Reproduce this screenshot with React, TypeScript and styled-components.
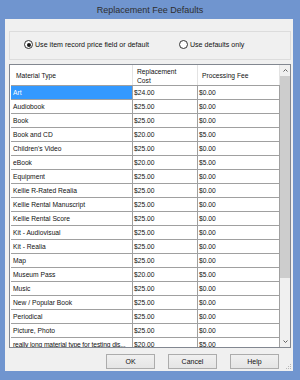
import styled, { createGlobalStyle, css } from "styled-components";

const FRAME = "#7095cf";
const GRID_LINE = "#a0a0a0";

const GlobalStyle = createGlobalStyle`
  html, body {
    margin: 0;
    padding: 0;
    background: #fff;
  }
  body {
    font-family: "Liberation Sans", Arial, sans-serif;
  }
`;

const Window = styled.div`
  width: 300px;
  height: 380px;
  box-sizing: border-box;
  background: ${FRAME};
  display: flex;
  flex-direction: column;
  padding: 0 7px 9px 5px;
`;

const TitleBar = styled.div`
  height: 19px;
  margin: 0 -7px 0 -5px;
  line-height: 20px;
  text-align: center;
  font-size: 9px;
  color: #2e2e2e;
`;

const Client = styled.div`
  position: relative;
  flex: 1;
  background: #f0f0f0;
  display: flex;
  flex-direction: column;
  padding: 12px 2px 0 4px;
`;

const OptionGroup = styled.div`
  height: 29px;
  box-sizing: border-box;
  border: 1px solid #dcdcdc;
  display: flex;
  align-items: center;
  gap: 30px;
  padding: 0 0 2px 14px;
`;

const RadioOption = styled.label`
  display: flex;
  align-items: center;
  gap: 2px;
  font-size: 7.1px;
  color: #111;
`;

const RadioDot = styled.span<{ $checked?: boolean }>`
  position: relative;
  width: 9px;
  height: 9px;
  box-sizing: border-box;
  border-radius: 50%;
  border: 1px solid #333;
  background: #fff;

  ${(p) =>
    p.$checked &&
    css`
      &::after {
        content: "";
        position: absolute;
        inset: 1.5px;
        border-radius: 50%;
        background: #1a1a1a;
      }
    `}
`;

const Grid = styled.div`
  margin-top: 4px;
  height: 284px;
  box-sizing: border-box;
  border: 1px solid #828790;
  display: flex;
  background: #fff;
  overflow: hidden;
`;

const Table = styled.div`
  width: 270px;
  box-sizing: border-box;
  padding-left: 1px;
  display: flex;
  flex-direction: column;
`;

const COLUMNS = "122px 65px 82px";

const HeaderRow = styled.div`
  display: grid;
  grid-template-columns: ${COLUMNS};
  height: 21px;
  flex-shrink: 0;
  box-sizing: border-box;
  border-bottom: 1px solid ${GRID_LINE};
`;

const HeaderCell = styled.div<{ $pad: number }>`
  display: flex;
  align-items: center;
  padding: 1px 0 0 ${(p) => p.$pad}px;
  border-right: 1px solid #e3e3e3;
  font-size: 6.7px;
  line-height: 9px;
  color: #111;
`;

const Row = styled.div`
  display: grid;
  grid-template-columns: ${COLUMNS};
  height: 14px;
  flex-shrink: 0;
  box-sizing: border-box;
  border-bottom: 1px solid ${GRID_LINE};
`;

const Cell = styled.div<{ $pad: number; $selected?: boolean; $tight?: boolean }>`
  padding-left: ${(p) => p.$pad}px;
  border-right: 1px solid ${GRID_LINE};
  font-size: 6.7px;
  line-height: 13px;
  white-space: nowrap;
  overflow: hidden;
  color: #111;
  letter-spacing: ${(p) => (p.$tight ? "-0.12px" : "0")};

  ${(p) =>
    p.$selected &&
    css`
      background: #3399ff;
      color: #fff;
    `}
`;

const ScrollBar = styled.div`
  width: 10px;
  display: flex;
  flex-direction: column;
  background: #f0f0f0;
`;

const ScrollArrow = styled.div`
  height: 11px;
  flex-shrink: 0;
  display: flex;
  align-items: center;
  justify-content: center;
`;

const ScrollThumb = styled.div`
  height: 202px;
  flex-shrink: 0;
  background: #cdcdcd;
`;

const ScrollTrack = styled.div`
  flex: 1;
`;

const ButtonRow = styled.div`
  display: flex;
  justify-content: flex-end;
  gap: 13px;
  margin-top: 6px;
  padding-right: 12px;
`;

const DialogButton = styled.button`
  width: 49px;
  height: 15px;
  box-sizing: border-box;
  padding: 0;
  border: 1px solid #acacac;
  background: linear-gradient(#f0f0f0, #e5e5e5);
  font-family: "Liberation Sans", Arial, sans-serif;
  font-size: 7px;
  color: #111;
`;

const Grip = styled.svg`
  position: absolute;
  right: 1px;
  bottom: 1px;
`;

const rows: [string, string, string][] = [
  ["Art", "$24.00", "$0.00"],
  ["Audiobook", "$25.00", "$0.00"],
  ["Book", "$25.00", "$0.00"],
  ["Book and CD", "$20.00", "$5.00"],
  ["Children's Video", "$25.00", "$0.00"],
  ["eBook", "$20.00", "$5.00"],
  ["Equipment", "$25.00", "$0.00"],
  ["Kellie R-Rated Realia", "$25.00", "$0.00"],
  ["Kellie Rental Manuscript", "$25.00", "$0.00"],
  ["Kellie Rental Score", "$25.00", "$0.00"],
  ["Kit - Audiovisual", "$25.00", "$0.00"],
  ["Kit - Realia", "$25.00", "$0.00"],
  ["Map", "$25.00", "$0.00"],
  ["Museum Pass", "$20.00", "$5.00"],
  ["Music", "$25.00", "$0.00"],
  ["New / Popular Book", "$25.00", "$0.00"],
  ["Periodical", "$25.00", "$0.00"],
  ["Picture, Photo", "$25.00", "$0.00"],
  ["really long material type for testing dis...", "$20.00", "$5.00"],
];

function Chevron({ up }: { up?: boolean }) {
  return (
    <svg width="5" height="3" viewBox="0 0 5 3">
      <path
        d={up ? "M0.5 2.5 L2.5 0.5 L4.5 2.5" : "M0.5 0.5 L2.5 2.5 L4.5 0.5"}
        fill="none"
        stroke="#606060"
        strokeWidth="1"
      />
    </svg>
  );
}

export default function App() {
  return (
    <>
      <GlobalStyle />
      <Window>
        <TitleBar>Replacement Fee Defaults</TitleBar>
        <Client>
          <OptionGroup>
            <RadioOption>
              <RadioDot $checked />
              Use item record price field or default
            </RadioOption>
            <RadioOption>
              <RadioDot />
              Use defaults only
            </RadioOption>
          </OptionGroup>

          <Grid>
            <Table>
              <HeaderRow>
                <HeaderCell $pad={5}>Material Type</HeaderCell>
                <HeaderCell $pad={4}>
                  Replacement
                  <br />
                  Cost
                </HeaderCell>
                <HeaderCell $pad={4}>Processing Fee</HeaderCell>
              </HeaderRow>
              {rows.map(([name, cost, fee], i) => (
                <Row key={name}>
                  <Cell $pad={2} $selected={i === 0} $tight={name.endsWith("...")}>
                    {name}
                  </Cell>
                  <Cell $pad={1}>{cost}</Cell>
                  <Cell $pad={1}>{fee}</Cell>
                </Row>
              ))}
            </Table>
            <ScrollBar>
              <ScrollArrow>
                <Chevron up />
              </ScrollArrow>
              <ScrollThumb />
              <ScrollTrack />
              <ScrollArrow>
                <Chevron />
              </ScrollArrow>
            </ScrollBar>
          </Grid>

          <ButtonRow>
            <DialogButton>OK</DialogButton>
            <DialogButton>Cancel</DialogButton>
            <DialogButton>Help</DialogButton>
          </ButtonRow>

          <Grip width="6" height="6" viewBox="0 0 6 6">
            <rect x="4" y="0" width="1" height="1" fill="#b8b8b8" />
            <rect x="2" y="2" width="1" height="1" fill="#b8b8b8" />
            <rect x="4" y="2" width="1" height="1" fill="#b8b8b8" />
            <rect x="0" y="4" width="1" height="1" fill="#b8b8b8" />
            <rect x="2" y="4" width="1" height="1" fill="#b8b8b8" />
            <rect x="4" y="4" width="1" height="1" fill="#b8b8b8" />
          </Grip>
        </Client>
      </Window>
    </>
  );
}
